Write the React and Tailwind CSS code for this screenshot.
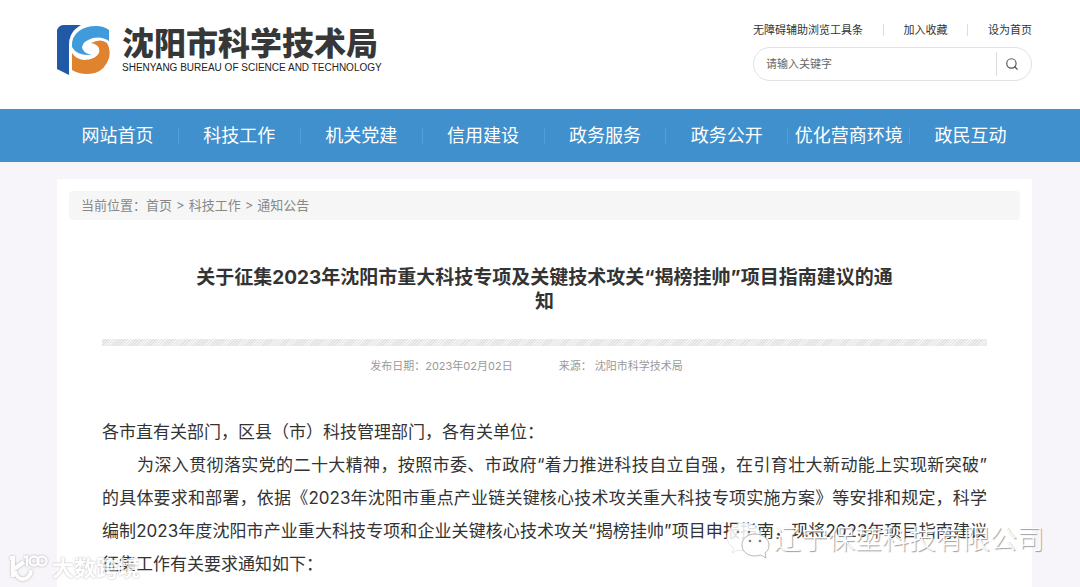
import { Search } from 'lucide-react';

const NAV = ['网站首页', '科技工作', '机关党建', '信用建设', '政务服务', '政务公开', '优化营商环境', '政民互动'];

function Emblem() {
  return (
    <svg viewBox="0 0 53 50" className="h-[50px] w-[53px] shrink-0" aria-hidden="true">
      <path d="M0 5Q2 0 7 0H24Q17 4 14 10Q12 14 12 20V50L0 44Z" fill="#2159a7" />
      <path d="M15 22Q14 12 22 6Q29 1 39 1Q47 1 52 5V16Q45 11 36 13Q26 16 25 22Q25 27 34 30Q20 31 15 22Z" fill="#3f9bdc" />
      <path d="M34 18Q44 13 50 18Q54 24 52 33Q48 45 38 48Q25 51 15 45V28Q19 34 27 35Q38 35 42 28Q44 20 34 18Z" fill="#e0832f" />
    </svg>
  );
}

function Header() {
  return (
    <header className="flex h-[109px] items-start justify-between bg-white pr-12 pl-[57px]">
      <a href="#" className="flex gap-3 pt-[25px]">
        <Emblem />
        <span className="flex flex-col">
          <span className="text-[32px] leading-[37px] font-black text-[#373737]">沈阳市科学技术局</span>
          <span className="font-['Liberation_Sans'] text-[10px] leading-3 text-[#222]">
            SHENYANG BUREAU OF SCIENCE AND TECHNOLOGY
          </span>
        </span>
      </a>
      <div className="w-[279px] pt-[22px]">
        <div className="flex items-center justify-between text-[11px] leading-4 text-[#333]">
          <a href="#">无障碍辅助浏览工具条</a>
          <span className="h-3 w-px bg-[#ddd]" />
          <a href="#">加入收藏</a>
          <span className="h-3 w-px bg-[#ddd]" />
          <a href="#">设为首页</a>
        </div>
        <form className="mt-[9px] flex h-[34px] items-center rounded-full border border-[#e2e2e2]">
          <input
            type="text"
            aria-label="关键字"
            placeholder="请输入关键字"
            className="min-w-0 flex-1 bg-transparent pl-3 text-[11px] outline-none placeholder:text-[#666]"
          />
          <button type="button" aria-label="搜索" className="flex h-6 w-[35px] items-center border-l border-[#ddd] pl-2 text-[#555]">
            <Search size={14} strokeWidth={2} />
          </button>
        </form>
      </div>
    </header>
  );
}

function SiteNav() {
  return (
    <nav className="bg-[#3f90cd] pr-12 pl-[57px]">
      <ul className="grid h-[53px] grid-cols-8 items-center">
        {NAV.map((name) => (
          <li key={name} className="flex h-4 items-center justify-center border-r border-[#4ba0e2] last:border-transparent">
            <a href="#" className="text-lg whitespace-nowrap text-white">{name}</a>
          </li>
        ))}
      </ul>
    </nav>
  );
}

function Watermarks() {
  return (
    <>
      <div className="absolute right-9 bottom-7 flex items-center gap-1" aria-hidden="true">
        <svg viewBox="0 0 44 38" className="h-[38px] w-11" fill="#fff" fillOpacity="0.85" stroke="#999" strokeWidth="0.7">
          <path d="M18 2C8 2 1 8 1 16c0 5 3 9 7 11l-2 5 6-3c12 2 23-3 23-13C35 8 28 2 18 2Z" stroke="#e0e0e0" />
          <path d="M29 13c-8 0-13 5-13 11s5 11 13 11l6-1 5 3-1-5c3-2 4-5 4-8 0-6-6-11-14-11Z" />
          <g fill="#666" stroke="none">
            <circle cx="24" cy="20" r="1.3" />
            <circle cx="34" cy="20" r="1.3" />
            <circle cx="12" cy="11" r="1.3" />
            <circle cx="23" cy="11" r="1.3" />
          </g>
        </svg>
        <span className="text-[27px] leading-8 font-light text-white [text-shadow:1px_1px_1px_#999]">辽宁保堃科技有限公司</span>
      </div>
      <div className="absolute bottom-1 left-2 flex items-center gap-1 text-white opacity-80" aria-hidden="true">
        <svg viewBox="0 0 40 30" className="h-[30px] w-10 drop-shadow-[0_0_1px_#999]" fill="none" stroke="#fff" strokeWidth="4">
          <path d="M2 5h3v19M16 9L6 16M7 18C9 29 22 29 23 17" />
          <path d="M16 4h3v9" strokeWidth="2.5" />
          <ellipse cx="26" cy="8" rx="4.5" ry="4.5" strokeWidth="2.5" />
          <ellipse cx="34" cy="8" rx="4.5" ry="4.5" strokeWidth="2.5" />
        </svg>
        <span className="text-[22px] leading-7 font-bold [text-shadow:0_0_2px_#999]">大数跨境</span>
      </div>
    </>
  );
}

export default function App() {
  return (
    <div className="relative h-screen overflow-hidden bg-[#f7f5f9] font-['Inter','Noto_Sans_CJK_SC',sans-serif]">
      <Header />
      <SiteNav />
      <main className="mt-[17px] mr-12 ml-[57px] bg-white px-3 pt-3 pb-10">
        <div className="flex h-[29px] items-center gap-[7px] rounded-sm bg-[#f6f6f6] pl-3 text-[13px] text-[#888]">
          <span className="w-[58px] whitespace-nowrap">当前位置：</span>
          <span className="flex gap-1">
            <a href="#">首页</a>
            <span>&gt;</span>
            <a href="#">科技工作</a>
            <span>&gt;</span>
            <a href="#">通知公告</a>
          </span>
        </div>
        <article className="pt-[46px] pr-[33px] pl-[33px] text-[#333]">
          <h1 className="px-20 text-center text-[19px] leading-6 font-bold">
            关于征集2023年沈阳市重大科技专项及关键技术攻关“揭榜挂帅”项目指南建议的通<br />知
          </h1>
          <div className="mt-[25px] h-[7px] bg-[repeating-linear-gradient(135deg,#e2e2e2_0_1px,#f4f4f4_1px_2px)]" />
          <div className="flex justify-center gap-[46px] pt-3 pr-9 text-[11px] leading-4 text-[#999]">
            <span>发布日期：2023年02月02日</span>
            <span>来源： 沈阳市科学技术局</span>
          </div>
          <div className="mt-[42px] text-[17px] leading-[33px]">
            <p>各市直有关部门，区县（市）科技管理部门，各有关单位：</p>
            <p className="indent-[35px]">
              <span className="block text-justify [text-align-last:justify]">
                为深入贯彻落实党的二十大精神，按照市委、市政府“着力推进科技自立自强，在引育壮大新动能上实现新突破”
                <br />
                的具体要求和部署，依据《2023年沈阳市重点产业链关键核心技术攻关重大科技专项实施方案》等安排和规定，科学
                <br />
                编制2023年度沈阳市产业重大科技专项和企业关键核心技术攻关“揭榜挂帅”项目申报指南，现将2023年项目指南建议
              </span>
              <span className="block indent-0">征集工作有关要求通知如下：</span>
            </p>
          </div>
        </article>
      </main>
      <Watermarks />
    </div>
  );
}
